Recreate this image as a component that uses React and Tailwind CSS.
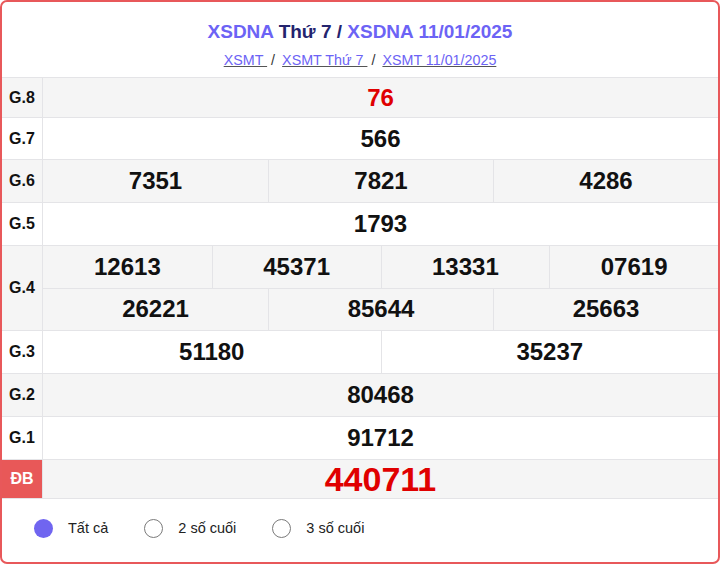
const rows = [
  { label: 'G.8', h: 'h-[40px]', gray: true, cells: [['76']], red: true },
  { label: 'G.7', h: 'h-[42px]', cells: [['566']] },
  { label: 'G.6', h: 'h-[43px]', gray: true, cells: [['7351', '7821', '4286']] },
  { label: 'G.5', h: 'h-[43px]', cells: [['1793']] },
  {
    label: 'G.4',
    h: 'h-[85px]',
    gray: true,
    cells: [
      ['12613', '45371', '13331', '07619'],
      ['26221', '85644', '25663'],
    ],
  },
  { label: 'G.3', h: 'h-[43px]', cells: [['51180', '35237']] },
  { label: 'G.2', h: 'h-[43px]', gray: true, cells: [['80468']] },
  { label: 'G.1', h: 'h-[43px]', cells: [['91712']] },
]

const gridCols = {
  1: 'grid-cols-1',
  2: 'grid-cols-2',
  3: 'grid-cols-3',
  4: 'grid-cols-4',
}

function Row({ label, h, gray, cells, red }) {
  return (
    <div className={`flex ${h} border-t border-[#e4e4e7] ${gray ? 'bg-[#f5f5f5]' : 'bg-white'}`}>
      <div className="w-[41px] shrink-0 flex items-center justify-center border-r border-[#e4e4e7] text-[16px] font-bold text-[#111]">
        {label}
      </div>
      <div className="flex-1 flex flex-col">
        {cells.map((line, i) => (
          <div
            key={i}
            className={`flex-1 grid ${gridCols[line.length]} ${i > 0 ? 'border-t border-[#e4e4e7]' : ''}`}
          >
            {line.map((n, j) => (
              <div
                key={n}
                className={`flex items-center justify-center text-[24px] font-bold ${red ? 'text-[#e00000]' : 'text-[#111]'} ${j > 0 ? 'border-l border-[#e4e4e7]' : ''}`}
              >
                {n}
              </div>
            ))}
          </div>
        ))}
      </div>
    </div>
  )
}

function Radio({ checked, label }) {
  return (
    <label className="flex items-center gap-[15px]">
      <span
        className={`w-[19px] h-[19px] rounded-full ${checked ? 'bg-[#7065f0]' : 'border border-[#7a7a7a] bg-white'}`}
      />
      <span className="text-[14.5px] text-[#222]">{label}</span>
    </label>
  )
}

export default function App() {
  return (
    <div
      className="w-[720px] h-[564px] border-2 border-[#e8585a] rounded-[7px] bg-white overflow-hidden flex flex-col"
      style={{ fontFamily: '"Liberation Sans", Arial, sans-serif' }}
    >
      <div className="pt-[18px] pb-[7px] flex flex-col items-center">
        <h2 className="text-[19px] leading-[24px] font-bold">
          <a className="text-[#6c63f5]">XSDNA</a>
          <span className="text-[#24246e]"> Thứ 7 / </span>
          <a className="text-[#6c63f5]">XSDNA 11/01/2025</a>
        </h2>
        <div className="mt-[6px] flex text-[14.3px] leading-[20px] text-[#333]">
          <a className="text-[#6c63f5] underline decoration-[#555] whitespace-pre">XSMT </a>
          <span className="ml-[4px] mr-[7px]">/</span>
          <a className="text-[#6c63f5] underline decoration-[#555] whitespace-pre">XSMT Thứ 7 </a>
          <span className="ml-[4px] mr-[7px]">/</span>
          <a className="text-[#6c63f5] underline decoration-[#555]">XSMT 11/01/2025</a>
        </div>
      </div>

      <div className="border-b border-[#e4e4e7]">
        {rows.map((r) => (
          <Row key={r.label} {...r} />
        ))}
        <div className="flex h-[39px] border-t border-[#e4e4e7] bg-[#f5f5f5]">
          <div className="w-[41px] shrink-0 flex items-center justify-center bg-[#e85858] border-r border-[#e4e4e7] text-[16px] font-bold text-white">
            ĐB
          </div>
          <div className="flex-1 flex items-center justify-center text-[34px] font-bold text-[#e00000]">
            440711
          </div>
        </div>
      </div>

      <div className="flex-1 flex items-center gap-[36px] pl-[32px] pb-[4px]">
        <Radio checked label="Tất cả" />
        <Radio label="2 số cuối" />
        <Radio label="3 số cuối" />
      </div>
    </div>
  )
}
